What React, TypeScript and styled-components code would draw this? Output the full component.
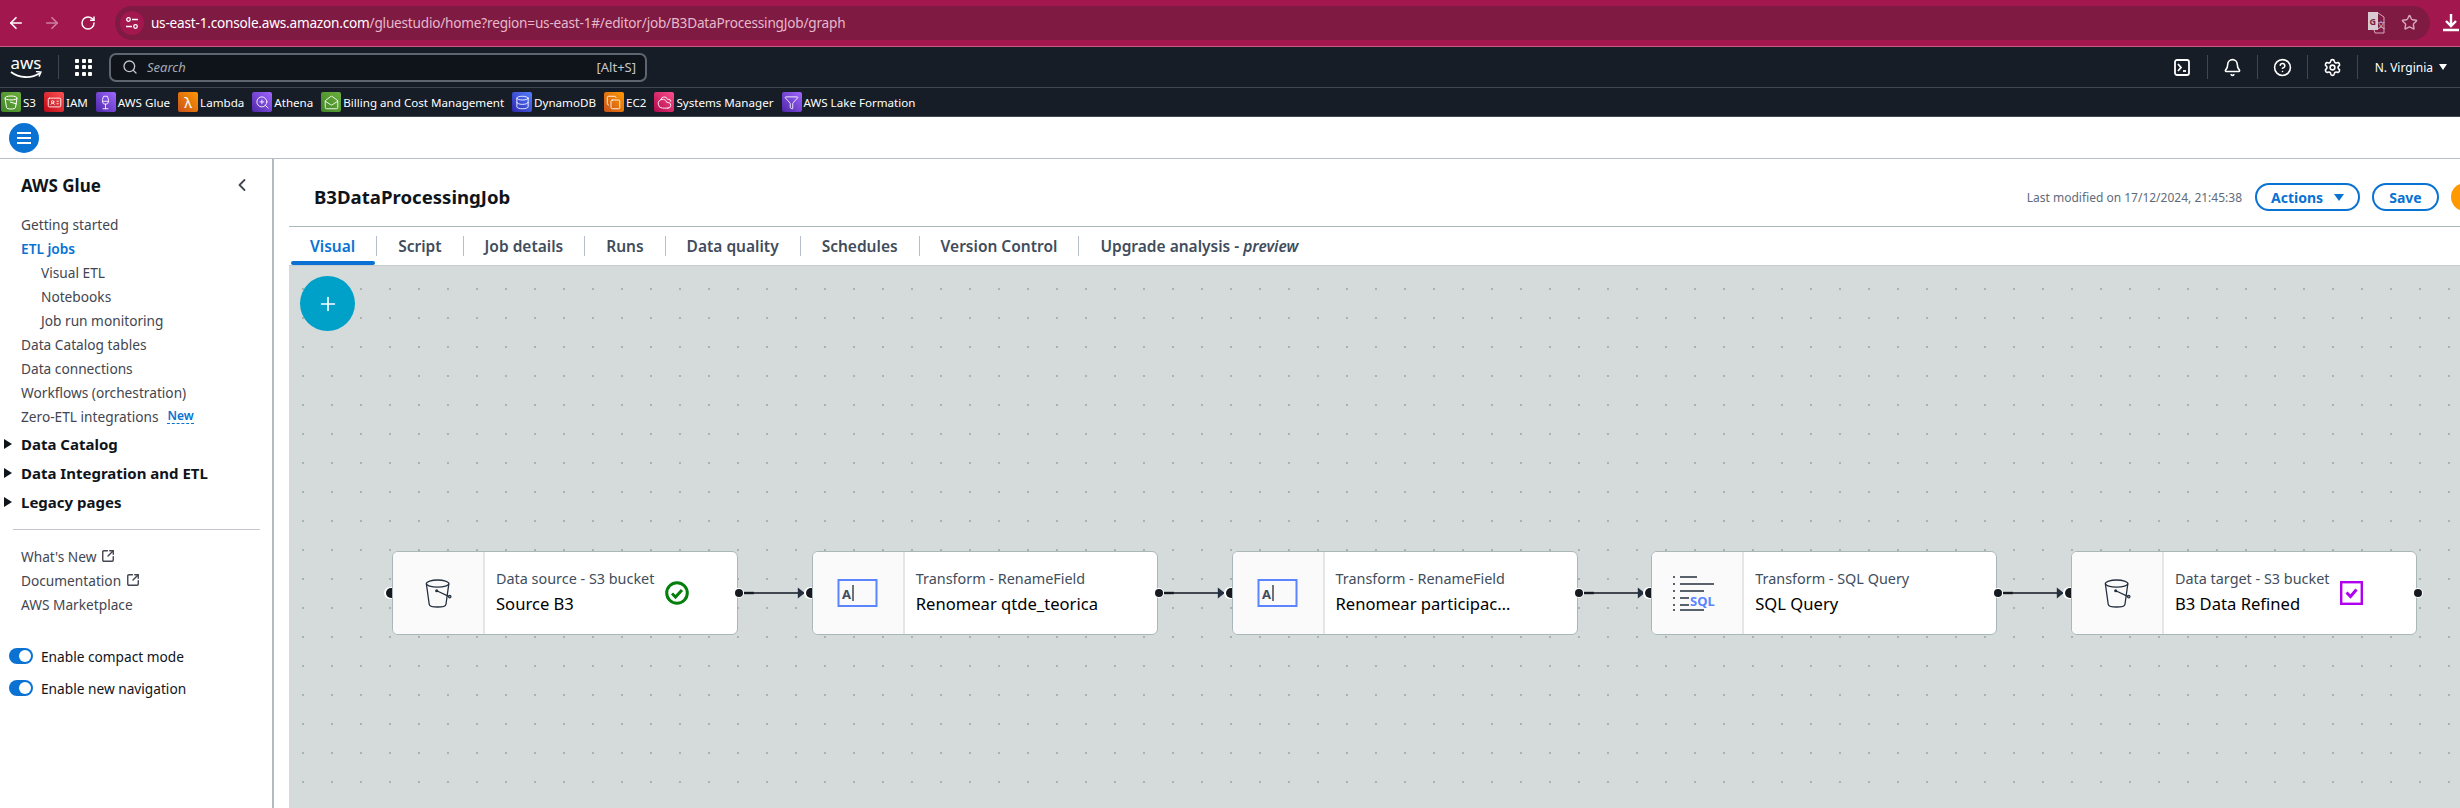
import React from 'react';
import styled, { createGlobalStyle } from 'styled-components';
import {
  ArrowLeft,
  ArrowRight,
  Bell,
  ChevronLeft,
  CircleHelp,
  Cloudy,
  Copy,
  Database,
  IdCard,
  MailOpen,
  Plus,
  RotateCw,
  Search,
  Settings,
  SquareArrowOutUpRight,
  Star,
  Wine,
  ZoomIn,
  Filter,
} from 'lucide-react';

const GlobalStyle = createGlobalStyle`
  html, body {
    margin: 0;
    padding: 0;
    overflow: hidden;
    background: #fff;
  }
  * {
    box-sizing: border-box;
  }
  body {
    font-family: "Noto Sans", "Open Sans", sans-serif;
  }
`;

const Page = styled.div`
  display: flex;
  flex-direction: column;
  width: 2460px;
  height: 808px;
  overflow: hidden;
`;

/* browser chrome */
const ChromeBar = styled.div`
  display: flex;
  align-items: center;
  height: 47px;
  flex-shrink: 0;
  padding: 0 0 1px 6px;
  background: #a3174f;
  border-bottom: 1px solid #c95a85;
  color: #fff;
`;

const ChromeButton = styled.div<{ $dim?: boolean }>`
  display: flex;
  align-items: center;
  justify-content: center;
  width: 20px;
  height: 20px;
  margin-right: 16px;
  opacity: ${(p) => (p.$dim ? 0.45 : 1)};
`;

const Omnibox = styled.div`
  display: flex;
  align-items: center;
  width: 2319px;
  height: 34px;
  margin-left: 1px;
  padding: 0 12px 0 5px;
  border-radius: 17px;
  background: #7f1a43;
`;

const SiteInfo = styled.div`
  display: flex;
  align-items: center;
  justify-content: center;
  width: 24px;
  height: 24px;
  margin-right: 7px;
  border-radius: 50%;
  background: #a3174f;
`;

const UrlText = styled.div`
  flex: 1;
  font-family: "Noto Sans", sans-serif;
  font-size: 13.6px;
  letter-spacing: -0.2px;
  color: #e6b8cb;
  white-space: nowrap;

  b {
    font-weight: 400;
    color: #fff;
  }
`;

const OmniIcons = styled.div`
  display: flex;
  align-items: center;
  gap: 16px;
  color: #d9a8bd;
`;

const DownloadSlot = styled.div`
  margin-left: 12px;
  display: flex;
  color: #fff;
`;

/* aws top nav */
const TopNav = styled.div`
  display: flex;
  align-items: center;
  height: 41px;
  flex-shrink: 0;
  padding-left: 10px;
  background: #161d26;
  border-bottom: 1px solid #414750;
  color: #fff;
`;

const AwsLogo = styled.div`
  display: flex;
  flex-direction: column;
  align-items: center;
  width: 32px;
  font-size: 17px;
  line-height: 18px;
  color: #fff;
  font-family: "Noto Sans", sans-serif;

  svg {
    margin-top: -1px;
  }
`;

const NavDivider = styled.div`
  width: 1px;
  height: 24px;
  margin-left: 16px;
  background: #414750;
`;

const AppGrid = styled.div`
  display: grid;
  grid-template-columns: repeat(3, 4px);
  grid-auto-rows: 4px;
  gap: 2.5px;
  margin: 0 17px 0 16px;

  i {
    display: block;
    background: #fff;
    border-radius: 1px;
  }
`;

const SearchBox = styled.div`
  display: flex;
  align-items: center;
  width: 538px;
  height: 29px;
  padding: 0 9px 0 11px;
  border: 2px solid #5f6570;
  border-radius: 7px;
  background: #0f141a;
  color: #c6c6cd;
  font-size: 13px;
`;

const SearchHint = styled.span`
  flex: 1;
  margin-left: 9px;
  font-style: italic;
  color: #a4abb5;
`;

const NavRight = styled.div`
  display: flex;
  align-items: center;
  margin-left: auto;
  height: 24px;
`;

const NavIcon = styled.div`
  display: flex;
  align-items: center;
  justify-content: center;
  width: 50px;
  height: 24px;
  border-right: 1px solid #414750;
`;

const Region = styled.div`
  display: flex;
  align-items: center;
  gap: 6px;
  padding: 0 13px 0 17px;
  font-size: 12px;
  color: #fff;
`;

const DownCaret = styled.span<{ $size: number; $color: string }>`
  display: inline-block;
  width: 0;
  height: 0;
  border-left: ${(p) => p.$size}px solid transparent;
  border-right: ${(p) => p.$size}px solid transparent;
  border-top: ${(p) => p.$size + 2}px solid ${(p) => p.$color};
`;

/* favorites */
const FavBar = styled.div`
  display: flex;
  align-items: center;
  gap: 8px;
  height: 29px;
  flex-shrink: 0;
  padding-left: 1px;
  background: #161d26;
  border-bottom: 1px solid #414750;
`;

const FavItem = styled.div`
  display: flex;
  align-items: center;
  gap: 2px;
  font-size: 11.6px;
  color: #fff;
  white-space: nowrap;
`;

const FavIcon = styled.div<{ $from: string; $to: string }>`
  display: flex;
  align-items: center;
  justify-content: center;
  width: 20px;
  height: 20px;
  border-radius: 2px;
  background: linear-gradient(45deg, ${(p) => p.$from}, ${(p) => p.$to});
  color: #fff;
  font-size: 15px;
  line-height: 1;
`;

const MenuRow = styled.div`
  display: flex;
  align-items: center;
  height: 42px;
  flex-shrink: 0;
  padding-left: 9px;
  background: #fff;
  border-bottom: 1px solid #b6bec9;
`;

const MenuButton = styled.div`
  display: flex;
  flex-direction: column;
  align-items: center;
  justify-content: center;
  gap: 3px;
  width: 30px;
  height: 30px;
  border-radius: 50%;
  background: #0972d3;

  i {
    display: block;
    width: 14px;
    height: 2px;
    background: #fff;
  }
`;

const Main = styled.div`
  display: flex;
  flex: 1;
  min-height: 0;
`;

/* side navigation */
const Sidebar = styled.nav`
  display: flex;
  flex-direction: column;
  width: 274px;
  flex-shrink: 0;
  padding-top: 14px;
  border-right: 2px solid #b5b9c0;
  background: #fff;
`;

const SideTitle = styled.div`
  display: flex;
  align-items: center;
  justify-content: space-between;
  height: 24px;
  padding: 0 20px 0 21px;
  font-size: 17px;
  font-weight: 700;
  color: #0f141a;

  svg {
    color: #424650;
  }
`;

const SideList = styled.div`
  display: flex;
  flex-direction: column;
  margin-top: 15px;
`;

const SideLink = styled.div<{ $sub?: boolean; $active?: boolean }>`
  display: flex;
  align-items: center;
  gap: 5px;
  height: 24px;
  padding-left: ${(p) => (p.$sub ? 41 : 21)}px;
  font-size: 13.7px;
  font-weight: ${(p) => (p.$active ? 600 : 400)};
  color: ${(p) => (p.$active ? '#0972d3' : '#424650')};
  white-space: nowrap;
`;

const NewBadge = styled.span`
  margin-left: 4px;
  font-size: 12px;
  font-weight: 600;
  line-height: 15px;
  color: #0972d3;
  border-bottom: 1px dashed #0972d3;
`;

const SideSections = styled.div`
  display: flex;
  flex-direction: column;
  margin-top: 1px;
`;

const SideSection = styled.div`
  display: flex;
  align-items: center;
  height: 29px;
  padding-left: 4px;
  font-size: 15px;
  font-weight: 700;
  color: #0f141a;
  white-space: nowrap;

  &::before {
    content: '';
    width: 0;
    height: 0;
    margin-right: 9px;
    border-top: 5px solid transparent;
    border-bottom: 5px solid transparent;
    border-left: 8px solid #0f141a;
  }
`;

const SideRule = styled.div`
  height: 1px;
  margin: 13px 12px 14px 13px;
  background: #c6c6cd;
`;

const ToggleList = styled.div`
  display: flex;
  flex-direction: column;
  margin-top: 24px;
`;

const ToggleRow = styled.div`
  display: flex;
  align-items: center;
  gap: 8px;
  height: 32px;
  padding-left: 9px;
  font-size: 13.7px;
  color: #0f141a;
`;

const ToggleTrack = styled.div`
  display: flex;
  align-items: center;
  justify-content: flex-end;
  width: 24px;
  height: 16px;
  padding-right: 2px;
  border-radius: 8px;
  background: #0972d3;

  i {
    display: block;
    width: 12px;
    height: 12px;
    border-radius: 50%;
    background: #fff;
  }
`;

/* job editor */
const Content = styled.div`
  display: flex;
  flex-direction: column;
  flex: 1;
  min-width: 0;
  padding-left: 15px;
`;

const JobHeader = styled.div`
  display: flex;
  align-items: center;
  height: 68px;
  flex-shrink: 0;
  padding: 9px 0 0 25px;
  border-bottom: 1px solid #aab7b8;
`;

const JobTitle = styled.h1`
  margin: 0 auto 2px 0;
  font-size: 18.6px;
  font-weight: 700;
  color: #0f141a;
`;

const Modified = styled.span`
  margin-right: 13px;
  font-size: 12px;
  color: #5f6b7a;
`;

const PillButton = styled.div<{ $width: number }>`
  display: flex;
  align-items: center;
  justify-content: center;
  gap: 11px;
  width: ${(p) => p.$width}px;
  height: 28px;
  margin-right: 12px;
  border: 2px solid #0972d3;
  border-radius: 14px;
  font-size: 14px;
  font-weight: 700;
  color: #0972d3;
`;

const OrangeDot = styled.div`
  flex-shrink: 0;
  width: 28px;
  height: 28px;
  margin-right: -19px;
  border-radius: 50%;
  background: #ff9900;
`;

const TabBar = styled.div`
  display: flex;
  align-items: center;
  height: 39px;
  flex-shrink: 0;
  border-bottom: 1px solid #c6cdcd;
`;

const Tab = styled.div<{ $active?: boolean }>`
  position: relative;
  display: flex;
  align-items: center;
  height: 38px;
  padding: 0 21px;
  font-size: 15.5px;
  font-weight: 600;
  color: ${(p) => (p.$active ? '#0972d3' : '#414d5c')};
  white-space: nowrap;

  em {
    margin-left: 4px;
  }

  &::after {
    content: '';
    display: ${(p) => (p.$active ? 'block' : 'none')};
    position: absolute;
    left: 2px;
    right: 1px;
    bottom: 0;
    height: 4px;
    border-radius: 2px;
    background: #0972d3;
  }
`;

const TabSep = styled.div`
  width: 1px;
  height: 20px;
  background: #b6bec9;
`;

const Canvas = styled.div`
  position: relative;
  flex: 1;
  padding: 285px 0 0 103px;
  background-color: #d5dbdb;
  background-image: radial-gradient(circle at 1px 1px, #a9b1b1 0.7px, transparent 1.1px);
  background-size: 29px 29px;
  background-position: 13px 22px;
`;

const AddButton = styled.div`
  position: absolute;
  left: 11px;
  top: 10px;
  display: flex;
  align-items: center;
  justify-content: center;
  width: 55px;
  height: 55px;
  border-radius: 50%;
  background: #00a1c9;
  color: #fff;
`;

const Pipeline = styled.div`
  display: flex;
  align-items: center;
`;

const Node = styled.div`
  position: relative;
  display: flex;
  flex-shrink: 0;
  width: 346px;
  height: 84px;
  border: 1.5px solid #aab7b8;
  border-radius: 6px;
  background: #fff;
`;

const NodeIcon = styled.div`
  display: flex;
  align-items: center;
  justify-content: center;
  width: 92px;
  flex-shrink: 0;
  border-right: 2px solid #e3e7e7;
  border-radius: 5px 0 0 5px;
  background: #fafafa;
`;

const NodeBody = styled.div`
  display: flex;
  align-items: center;
  gap: 11px;
  padding-left: 11px;
`;

const NodeText = styled.div`
  display: flex;
  flex-direction: column;
  gap: 4px;
  padding-bottom: 2px;
  white-space: nowrap;
`;

const NodeKind = styled.div`
  font-size: 14.4px;
  line-height: 20px;
  color: #414d5c;
`;

const NodeName = styled.div`
  font-size: 16.6px;
  line-height: 22px;
  color: #000;
`;

const PortIn = styled.span`
  position: absolute;
  left: -7px;
  top: 36px;
  width: 6px;
  height: 10px;
  border-radius: 5px 0 0 5px;
  background: #16191f;
  box-shadow: -1px 0 0 1px #fff;
`;

const PortOut = styled.span`
  position: absolute;
  right: -6px;
  top: 37px;
  width: 8px;
  height: 8px;
  border-radius: 50%;
  background: #16191f;
  box-shadow: 0 0 0 1px #fff;
`;

const Connector = styled.svg`
  flex-shrink: 0;
  width: 73.75px;
  height: 12px;
`;

const Arrow = () => (
  <Connector viewBox="0 0 74 12">
    <path d="M6 6h10" stroke="#16191f" strokeWidth="2.4" />
    <path d="M16 6h50" stroke="#414750" strokeWidth="2" />
    <path d="M60 .5l7 5.500-7 5.500z" fill="#232f3e" />
  </Connector>
);

const BucketIcon = () => (
  <svg width="27" height="31" viewBox="0 0 30 34" fill="none" stroke="#232f3e" strokeWidth="1.4">
    <ellipse cx="14" cy="6" rx="12.5" ry="4" />
    <path d="M1.5 6l3.2 23c.4 2 4 3 9.3 3s8.9-1 9.300-3l3.200-23" />
    <path d="M13 14l14 6.500" />
    <circle cx="13" cy="14" r="1" fill="#232f3e" />
    <circle cx="27.500" cy="20.500" r="1.300" />
  </svg>
);

const RenameIcon = () => (
  <svg width="42" height="30" viewBox="0 0 42 30" fill="none">
    <rect x="1.500" y="2" width="38" height="26" stroke="#5a85ff" strokeWidth="2" />
    <text x="5" y="21" fontSize="13" fontWeight="700" fill="#414d5c" fontFamily="Noto Sans, sans-serif">A</text>
    <path d="M16 7v16" stroke="#16191f" strokeWidth="1.200" />
  </svg>
);

const SqlIcon = () => (
  <svg width="48" height="36" viewBox="0 0 48 36" fill="none" stroke="#232f3e" strokeWidth="1.600">
    <path d="M0 2h2M0 9h2M0 16h2M0 23h2M0 30h2M0 35h2" />
    <path d="M7 2h17M7 9h34M7 16h24M7 23h28M7 30h14M7 35h24" />
    <rect x="16" y="19" width="32" height="14" fill="#fafafa" stroke="none" />
    <text x="17" y="31" fontSize="13" fontWeight="700" fill="#5a85ff" stroke="none" fontFamily="Noto Sans, sans-serif">SQL</text>
  </svg>
);

const SuccessIcon = () => (
  <svg width="24" height="24" viewBox="0 0 24 24" fill="none" stroke="#037f0c">
    <circle cx="12" cy="12" r="10.300" strokeWidth="3" />
    <path d="M7 12.500l3.500 3.500L17 9" strokeWidth="3" />
  </svg>
);

const TargetIcon = () => (
  <svg width="23" height="24" viewBox="0 0 23 24" fill="none" stroke="#b100f0">
    <rect x="1.200" y="1.200" width="20.600" height="21.600" strokeWidth="2.400" />
    <path d="M6.500 11.500l4 4 6-7" strokeWidth="3" />
  </svg>
);

const ShellIcon = () => (
  <svg width="16" height="17" viewBox="0 0 16 17" fill="none" stroke="#fff" strokeWidth="1.800">
    <rect x="1" y="1" width="14" height="15" rx="2" />
    <path d="M4 5l3 3.500L4 12" />
    <path d="M9 12h3" />
  </svg>
);

const SiteIcon = () => (
  <svg width="14" height="14" viewBox="0 0 14 14" fill="none" stroke="#fff" strokeWidth="1.300">
    <circle cx="3.500" cy="3.500" r="1.800" />
    <path d="M7 3.500h6M1 10.500h6" />
    <circle cx="10.500" cy="10.500" r="1.800" />
  </svg>
);

const TranslateIcon = () => (
  <svg width="17" height="22" viewBox="0 0 17 22" fill="none">
    <path d="M1 1h9l6 4v16H7z" fill="#7f1a43" stroke="#d9a8bd" strokeWidth="1" />
    <rect x="0" y="0" width="10" height="18" fill="#d9c9d0" />
    <text x="1.500" y="13" fontSize="9" fontWeight="700" fill="#7f1a43" fontFamily="Noto Sans, sans-serif">G</text>
    <text x="9" y="16" fontSize="8" fill="#d9c9d0" fontFamily="Noto Sans CJK SC, sans-serif">文</text>
  </svg>
);

const DownloadIcon = () => (
  <svg width="18" height="20" viewBox="0 0 18 20" fill="none" stroke="#fff" strokeWidth="2.400">
    <path d="M9 1v11M4 8l5 5 5-5M1 17h16" />
  </svg>
);

const BucketFav = () => (
  <svg width="15" height="15" viewBox="0 0 15 15" fill="none" stroke="#fff" strokeWidth="1">
    <ellipse cx="7" cy="3" rx="6" ry="2" />
    <path d="M1 3l1.500 9.500c.3 1 2 1.500 4.500 1.500s4.200-.5 4.500-1.500L13 3M6 7l7 2" />
  </svg>
);

const favorites = [
  { label: 'S3', from: '#3f8624', to: '#6cae3e', icon: <BucketFav /> },
  { label: 'IAM', from: '#bd0816', to: '#ff5252', icon: <IdCard size={15} strokeWidth={1.4} /> },
  { label: 'AWS Glue', from: '#4d27a8', to: '#a166ff', icon: <Wine size={15} strokeWidth={1.4} /> },
  { label: 'Lambda', from: '#c8511b', to: '#ff9900', icon: 'λ' },
  { label: 'Athena', from: '#4d27a8', to: '#a166ff', icon: <ZoomIn size={15} strokeWidth={1.4} /> },
  { label: 'Billing and Cost Management', from: '#3f8624', to: '#6cae3e', icon: <MailOpen size={15} strokeWidth={1.4} /> },
  { label: 'DynamoDB', from: '#2e27ad', to: '#527fff', icon: <Database size={15} strokeWidth={1.4} /> },
  { label: 'EC2', from: '#c8511b', to: '#ff9900', icon: <Copy size={15} strokeWidth={1.4} /> },
  { label: 'Systems Manager', from: '#b0084d', to: '#ff4f8b', icon: <Cloudy size={15} strokeWidth={1.4} /> },
  { label: 'AWS Lake Formation', from: '#4d27a8', to: '#a166ff', icon: <Filter size={15} strokeWidth={1.4} /> },
];

const tabs = ['Script', 'Job details', 'Runs', 'Data quality', 'Schedules', 'Version Control'];

const nodes = [
  { kind: 'Data source - S3 bucket', name: 'Source B3', icon: <BucketIcon />, status: <SuccessIcon /> },
  { kind: 'Transform - RenameField', name: 'Renomear qtde_teorica', icon: <RenameIcon /> },
  { kind: 'Transform - RenameField', name: 'Renomear participac…', icon: <RenameIcon /> },
  { kind: 'Transform - SQL Query', name: 'SQL Query', icon: <SqlIcon /> },
  { kind: 'Data target - S3 bucket', name: 'B3 Data Refined', icon: <BucketIcon />, status: <TargetIcon /> },
];

const App: React.FC = () => {
  return (
    <Page>
      <GlobalStyle />

      <ChromeBar>
        <ChromeButton><ArrowLeft size={18} strokeWidth={2.2} /></ChromeButton>
        <ChromeButton $dim><ArrowRight size={18} strokeWidth={2.2} /></ChromeButton>
        <ChromeButton><RotateCw size={16} strokeWidth={2.2} /></ChromeButton>
        <Omnibox>
          <SiteInfo><SiteIcon /></SiteInfo>
          <UrlText>
            <b>us-east-1.console.aws.amazon.com</b>/gluestudio/home?region=us-east-1#/editor/job/B3DataProcessingJob/graph
          </UrlText>
          <OmniIcons>
            <TranslateIcon />
            <Star size={17} />
          </OmniIcons>
        </Omnibox>
        <DownloadSlot><DownloadIcon /></DownloadSlot>
      </ChromeBar>

      <TopNav>
        <AwsLogo>
          aws
          <svg width="32" height="9" viewBox="0 0 32 9" fill="none">
            <path d="M1 1c8 6 20 7 29 1" stroke="#fff" strokeWidth="1.800" />
            <path d="M26 .5l5 .5-2 4.500" stroke="#fff" strokeWidth="1.400" />
          </svg>
        </AwsLogo>
        <NavDivider />
        <AppGrid>
          {Array.from({ length: 9 }).map((_, i) => <i key={i} />)}
        </AppGrid>
        <SearchBox>
          <Search size={16} />
          <SearchHint>Search</SearchHint>
          <span>[Alt+S]</span>
        </SearchBox>
        <NavRight>
          <NavIcon><ShellIcon /></NavIcon>
          <NavIcon><Bell size={19} /></NavIcon>
          <NavIcon><CircleHelp size={19} /></NavIcon>
          <NavIcon><Settings size={19} /></NavIcon>
          <Region>
            N. Virginia
            <DownCaret $size={4} $color="#fff" />
          </Region>
        </NavRight>
      </TopNav>

      <FavBar>
        {favorites.map((fav) => (
          <FavItem key={fav.label}>
            <FavIcon $from={fav.from} $to={fav.to}>{fav.icon}</FavIcon>
            {fav.label}
          </FavItem>
        ))}
      </FavBar>

      <MenuRow>
        <MenuButton><i /><i /><i /></MenuButton>
      </MenuRow>

      <Main>
        <Sidebar>
          <SideTitle>
            AWS Glue
            <ChevronLeft size={20} strokeWidth={2.2} />
          </SideTitle>
          <SideList>
            <SideLink>Getting started</SideLink>
            <SideLink $active>ETL jobs</SideLink>
            <SideLink $sub>Visual ETL</SideLink>
            <SideLink $sub>Notebooks</SideLink>
            <SideLink $sub>Job run monitoring</SideLink>
            <SideLink>Data Catalog tables</SideLink>
            <SideLink>Data connections</SideLink>
            <SideLink>Workflows (orchestration)</SideLink>
            <SideLink>Zero-ETL integrations <NewBadge>New</NewBadge></SideLink>
          </SideList>
          <SideSections>
            <SideSection>Data Catalog</SideSection>
            <SideSection>Data Integration and ETL</SideSection>
            <SideSection>Legacy pages</SideSection>
          </SideSections>
          <SideRule />
          <SideLink>What's New <SquareArrowOutUpRight size={14} strokeWidth={2.4} /></SideLink>
          <SideLink>Documentation <SquareArrowOutUpRight size={14} strokeWidth={2.4} /></SideLink>
          <SideLink>AWS Marketplace</SideLink>
          <ToggleList>
            <ToggleRow><ToggleTrack><i /></ToggleTrack>Enable compact mode</ToggleRow>
            <ToggleRow><ToggleTrack><i /></ToggleTrack>Enable new navigation</ToggleRow>
          </ToggleList>
        </Sidebar>

        <Content>
          <JobHeader>
            <JobTitle>B3DataProcessingJob</JobTitle>
            <Modified>Last modified on 17/12/2024, 21:45:38</Modified>
            <PillButton $width={105}>Actions <DownCaret $size={5} $color="#0972d3" /></PillButton>
            <PillButton $width={67}>Save</PillButton>
            <OrangeDot />
          </JobHeader>

          <TabBar>
            <Tab $active>Visual</Tab>
            <TabSep />
            {tabs.map((tab) => (
              <React.Fragment key={tab}>
                <Tab>{tab}</Tab>
                <TabSep />
              </React.Fragment>
            ))}
            <Tab>Upgrade analysis - <em>preview</em></Tab>
          </TabBar>

          <Canvas>
            <AddButton><Plus size={22} strokeWidth={1.8} /></AddButton>
            <Pipeline>
              {nodes.map((node, i) => (
                <React.Fragment key={i}>
                  {i > 0 && <Arrow />}
                  <Node>
                    <PortIn />
                    <NodeIcon>{node.icon}</NodeIcon>
                    <NodeBody>
                      <NodeText>
                        <NodeKind>{node.kind}</NodeKind>
                        <NodeName>{node.name}</NodeName>
                      </NodeText>
                      {node.status}
                    </NodeBody>
                    <PortOut />
                  </Node>
                </React.Fragment>
              ))}
            </Pipeline>
          </Canvas>
        </Content>
      </Main>
    </Page>
  );
};

export default App;
